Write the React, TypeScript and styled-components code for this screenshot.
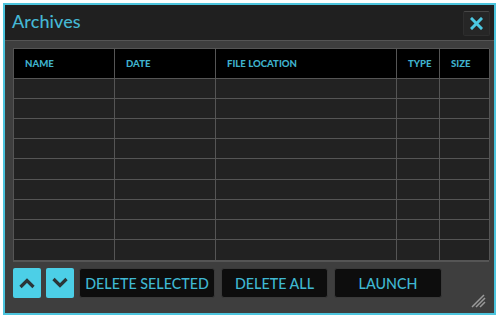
import React from "react";
import styled, { createGlobalStyle } from "styled-components";

const Global = createGlobalStyle`
  html, body { margin: 0; padding: 0; background: #ffffff; }
  body { font-family: Lato, "Open Sans", sans-serif; }
`;

const Window = styled.div`
  margin: 3px 0 0 3px;
  width: 493px;
  height: 312px;
  box-sizing: border-box;
  border: 2px solid #4cc4dd;
  background: #3e3e3e;
  display: flex;
  flex-direction: column;
  position: relative;
`;

const TitleBar = styled.div`
  height: 35px;
  flex: none;
  background: #202020;
  border-bottom: 1px solid #555555;
  display: flex;
  align-items: center;
  justify-content: space-between;
  padding: 0 4px 0 7px;
`;

const Title = styled.div`
  color: #45b8d4;
  font-size: 18px;
  font-weight: 500;
  letter-spacing: 0.1px;
  margin-top: -3px;
`;

const CloseButton = styled.button`
  width: 27px;
  height: 25px;
  margin-top: 1px;
  background: #262626;
  border: 1px solid #2e2e2e;
  border-top-color: #474747;
  border-radius: 2px;
  display: flex;
  align-items: center;
  justify-content: center;
  padding: 0;
`;

const Body = styled.div`
  flex: 1;
  padding: 7px 4px 0 8px;
  display: flex;
  flex-direction: column;
`;

const Table = styled.div`
  display: grid;
  grid-template-columns: 101px 101px 181px 43px 50px;
  grid-template-rows: 30px repeat(9, 1fr);
  height: 214px;
  border-top: 1px solid #555;
  border-left: 1px solid #555;
  border-bottom: 2px solid #555;
  box-sizing: border-box;
  width: 476px;
`;

const HeadCell = styled.div`
  background: #000000;
  border-right: 1px solid #555;
  border-bottom: 1px solid #555;
  color: #3fb2cd;
  font-size: 9.6px;
  font-weight: 900;
  display: flex;
  align-items: center;
  padding: 0 0 0 11px;
  box-sizing: border-box;
`;

const Cell = styled.div<{ $last?: boolean }>`
  background: #222222;
  border-right: 1px solid #555;
  border-bottom: ${(p) => (p.$last ? "none" : "1px solid #555")};
`;

const Toolbar = styled.div`
  display: flex;
  gap: 5px;
  margin-top: 6px;
  height: 30px;
`;

const ArrowButton = styled.button`
  width: 28px;
  height: 30px;
  background: #4ccfe7;
  border: none;
  border-radius: 2px;
  padding: 0;
  display: flex;
  align-items: center;
  justify-content: center;
`;

const ActionButton = styled.button<{ $w: number; $gap?: number }>`
  width: ${(p) => p.$w}px;
  margin-left: ${(p) => p.$gap ?? 0}px;
  height: 30px;
  background: #0d0d0d;
  border: 1px solid #3a3a3a;
  border-radius: 3px;
  color: #3fb8d2;
  font-family: Lato, "Open Sans", sans-serif;
  font-size: 14.3px;
  font-weight: 500;
  padding: 0;
`;

const Grip = styled.svg`
  position: absolute;
  right: 8px;
  bottom: 5px;
`;

const columns = ["NAME", "DATE", "FILE LOCATION", "TYPE", "SIZE"];

export default function App() {
  const rows = Array.from({ length: 9 });
  return (
    <>
      <Global />
      <Window>
        <TitleBar>
          <Title>Archives</Title>
          <CloseButton aria-label="close">
            <svg width="13" height="13" viewBox="0 0 13 13">
              <path d="M2 2 L11 11 M11 2 L2 11" stroke="#4cc8e2" strokeWidth="3" strokeLinecap="square" />
            </svg>
          </CloseButton>
        </TitleBar>
        <Body>
          <Table>
            {columns.map((c) => (
              <HeadCell key={c}>{c}</HeadCell>
            ))}
            {rows.map((_, r) =>
              columns.map((c) => <Cell key={`${r}-${c}`} $last={r === rows.length - 1} />)
            )}
          </Table>
          <Toolbar>
            <ArrowButton aria-label="up">
              <svg width="18" height="12" viewBox="0 0 18 12">
                <path d="M2.5 10 L9 3.5 L15.5 10" stroke="#2b3538" strokeWidth="3.2" fill="none" />
              </svg>
            </ArrowButton>
            <ArrowButton aria-label="down">
              <svg width="18" height="12" viewBox="0 0 18 12">
                <path d="M2.5 2 L9 8.5 L15.5 2" stroke="#2b3538" strokeWidth="3.2" fill="none" />
              </svg>
            </ArrowButton>
            <ActionButton $w={136}>DELETE SELECTED</ActionButton>
            <ActionButton $w={107} $gap={1}>DELETE ALL</ActionButton>
            <ActionButton $w={108} $gap={1}>LAUNCH</ActionButton>
          </Toolbar>
        </Body>
        <Grip width="16" height="16" viewBox="0 0 16 16">
          <path d="M2 15 L14 3 M6 15 L15 6 M10 15 L15 10" stroke="#9a9a9a" strokeWidth="1.5" />
        </Grip>
      </Window>
    </>
  );
}
